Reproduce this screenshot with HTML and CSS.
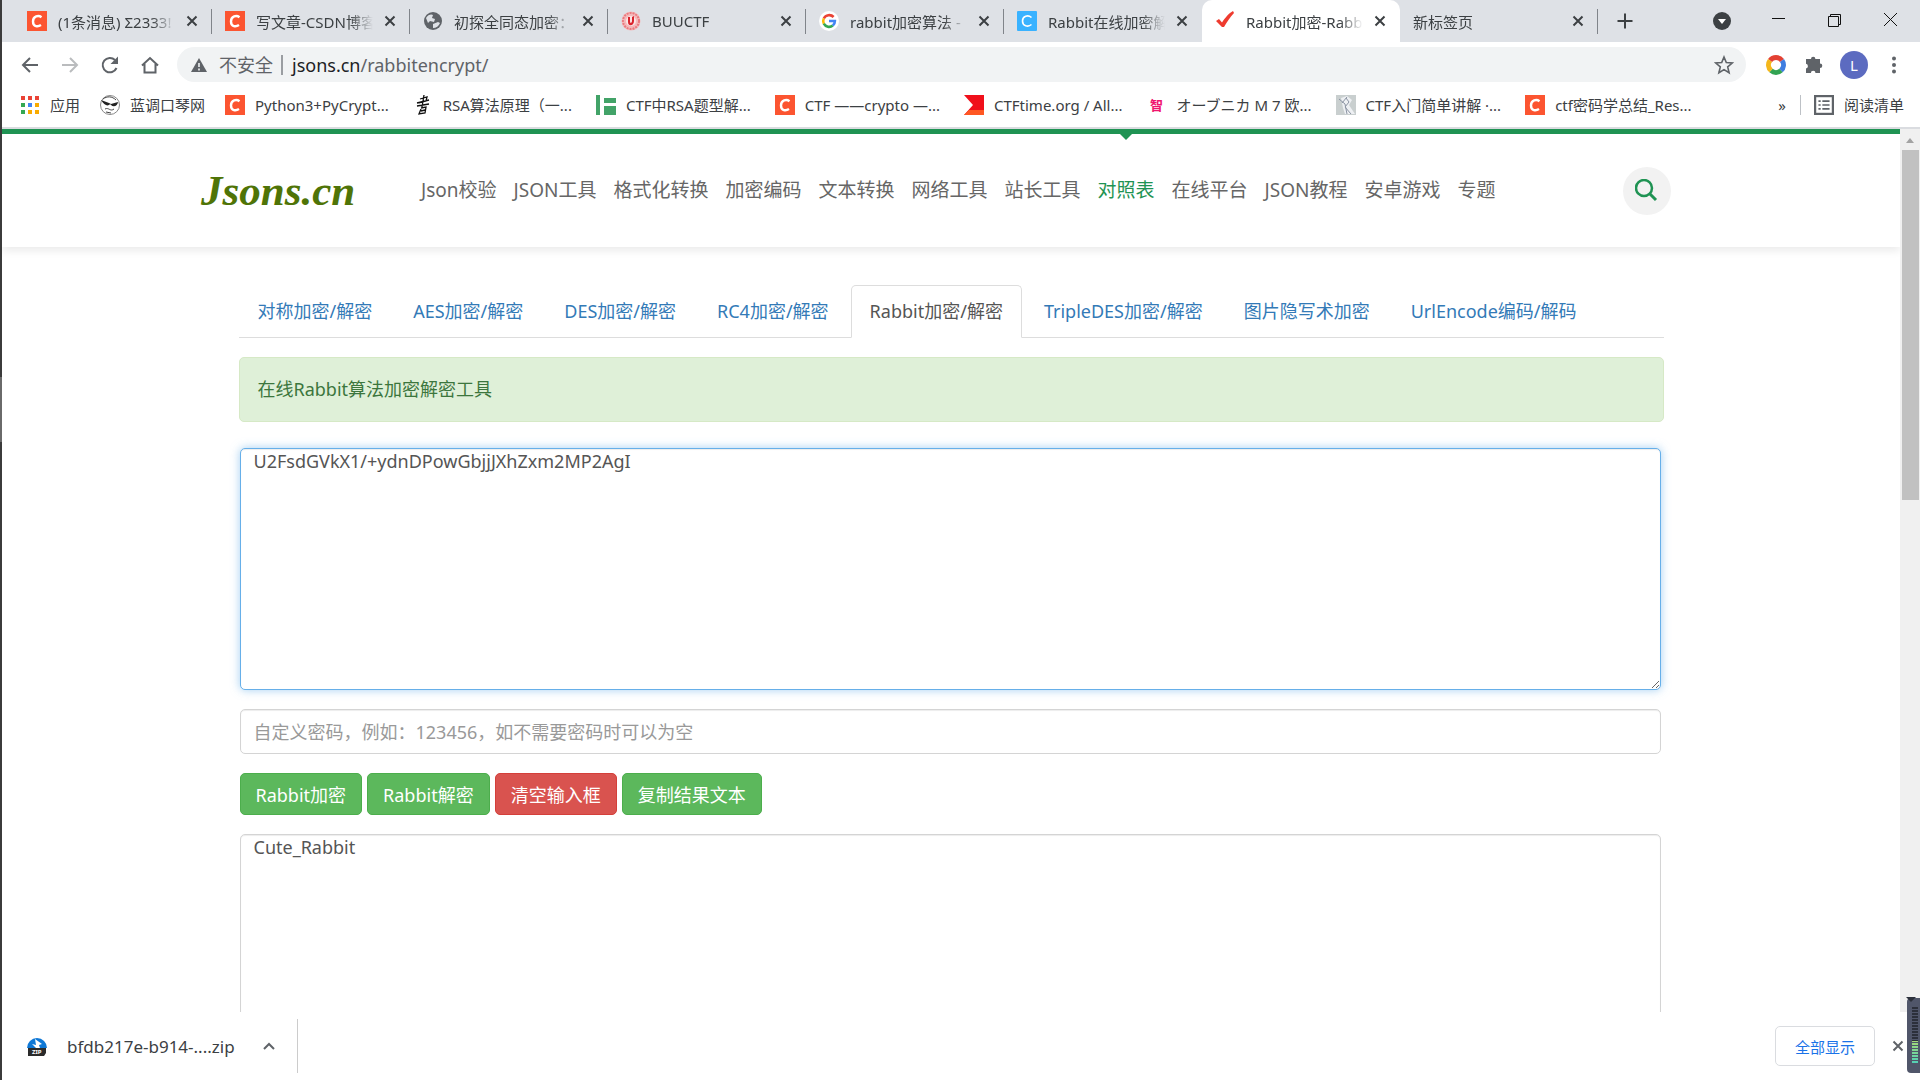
FILE: index.html
```
<!DOCTYPE html>
<html lang="zh-CN">
<head>
  <meta charset="UTF-8">
  <meta name="viewport" content="width=device-width, initial-scale=1.0">
  <title>Rabbit加密-Rabbit解密</title>
  <link rel="stylesheet" href="styles.css">
</head>
<body>
  <svg class="sprite" aria-hidden="true">
    <symbol id="csdn" viewBox="0 0 20 20"><rect width="20" height="20" fill="#fc5531"/><path d="M14.500 6.200C11.500 4 6 5 6 10.500s5 5.500 8 3.600" fill="none" stroke="#fff" stroke-width="2.400"/></symbol>
    <symbol id="close" viewBox="0 0 12 12"><path d="M1.500 1.500l9 9M10.500 1.500l-9 9" stroke="currentColor" stroke-width="2" fill="none"/></symbol>
  </svg>

  <div class="window">
    <div class="tab-strip">
      <div class="tab"><svg class="favicon"><use href="#csdn"/></svg><span class="tab-title">(1条消息) Σ2333!</span><button class="tab-close" aria-label="关闭"><svg><use href="#close"/></svg></button></div>
      <div class="tab"><svg class="favicon"><use href="#csdn"/></svg><span class="tab-title">写文章-CSDN博客</span><button class="tab-close" aria-label="关闭"><svg><use href="#close"/></svg></button></div>
      <div class="tab"><svg class="favicon" viewBox="0 0 20 20"><circle cx="10" cy="10" r="9" fill="#5f6368"/><path d="M3 7c2-4 6-4 7-3l-1 3 3 1-1 3-4-1-2 2zM10 13l5-2 2 1c-1 3-4 5-7 5z" fill="#dee1e6"/></svg><span class="tab-title">初探全同态加密：</span><button class="tab-close" aria-label="关闭"><svg><use href="#close"/></svg></button></div>
      <div class="tab"><svg class="favicon" viewBox="0 0 20 20"><circle cx="10" cy="10" r="9.500" fill="#f4b9bb"/><circle cx="10" cy="10" r="8" fill="none" stroke="#ea7a7f" stroke-width="2" stroke-dasharray="2 1"/><circle cx="10" cy="10" r="5" fill="#fbe5e5"/><path d="M7 6v5c0 5 6 4 6-1V5l-2 1v4c0 2-2 3-2 0V6z" fill="#d9232c"/></svg><span class="tab-title">BUUCTF</span><button class="tab-close" aria-label="关闭"><svg><use href="#close"/></svg></button></div>
      <div class="tab"><svg class="favicon" viewBox="0 0 20 20"><circle cx="10" cy="10" r="10" fill="#fff"/><g fill="none" stroke-width="2.600"><path d="M14.600 6A6 6 0 0 0 4.800 7.500" stroke="#ea4335"/><path d="M4.800 7.500a6 6 0 0 0 0 5.200" stroke="#fbbc05"/><path d="M4.800 12.700a6 6 0 0 0 9 1.900" stroke="#34a853"/><path d="M13.800 14.600A6 6 0 0 0 15.900 10H10" stroke="#4285f4"/></g></svg><span class="tab-title">rabbit加密算法 -</span><button class="tab-close" aria-label="关闭"><svg><use href="#close"/></svg></button></div>
      <div class="tab no-line"><svg class="favicon" viewBox="0 0 20 20"><rect width="20" height="20" rx="1" fill="#39b2ff"/><path d="M14.500 6.500C11 3.500 5.500 5 5.500 10s5.500 6.500 9 3.500" fill="none" stroke="#fff" stroke-width="1.600"/></svg><span class="tab-title">Rabbit在线加密解</span><button class="tab-close" aria-label="关闭"><svg><use href="#close"/></svg></button></div>
      <div class="tab active"><svg class="favicon" viewBox="0 0 20 20"><path d="M1 10l3-2 3 3.500C10 7 14 2 18 0l1 2c-4 4-7 9-10 14H7z" fill="#ee3b2f"/></svg><span class="tab-title">Rabbit加密-Rabb</span><button class="tab-close" aria-label="关闭"><svg><use href="#close"/></svg></button></div>
      <div class="tab"><span class="tab-title">新标签页</span><button class="tab-close" aria-label="关闭"><svg><use href="#close"/></svg></button></div>
      <button class="new-tab" aria-label="打开新的标签页"><svg viewBox="0 0 16 16"><path d="M8 0.500v15M0.500 8h15" stroke="#3c4043" stroke-width="2"/></svg></button>
      <div class="window-buttons">
        <button aria-label="搜索标签页"><svg viewBox="0 0 18 18"><circle cx="9" cy="9" r="9" fill="#3c4043"/><path d="M5 7h8l-4 5z" fill="#fff"/></svg></button>
        <button aria-label="最小化"><svg viewBox="0 0 18 18"><path d="M3 6.500h13" stroke="#111"/></svg></button>
        <button aria-label="还原"><svg viewBox="0 0 18 18"><path d="M3.500 4.500h10v10h-10zM5.500 4.500v-2h10v10h-2" fill="none" stroke="#111"/></svg></button>
        <button aria-label="关闭窗口"><svg viewBox="0 0 18 18"><path d="M3 1l13 13M16 1L3 14" stroke="#111"/></svg></button>
      </div>
    </div>

    <div class="toolbar">
      <button class="tool" aria-label="后退"><svg viewBox="0 0 20 20"><path d="M18 10H3M10 3l-7 7 7 7" fill="none" stroke="#5f6368" stroke-width="2"/></svg></button>
      <button class="tool" aria-label="前进"><svg viewBox="0 0 20 20"><path d="M2 10h15M10 3l7 7-7 7" fill="none" stroke="#babcbe" stroke-width="2"/></svg></button>
      <button class="tool" aria-label="重新加载"><svg viewBox="0 0 20 20"><path d="M16.500 13A7.200 7.200 0 1 1 15 5" fill="none" stroke="#5f6368" stroke-width="2"/><path d="M18 1.500V9h-7.500z" fill="#5f6368"/></svg></button>
      <button class="tool" aria-label="主页"><svg viewBox="0 0 20 20"><path d="M2 10.500L10 3l8 7.500M4.500 9v8.500h11V9" fill="none" stroke="#5f6368" stroke-width="2"/></svg></button>
      <div class="omnibox">
        <svg class="warn" viewBox="0 0 16 16"><path d="M8 1l8 14H0z" fill="#5f6368"/><path d="M8 6v4M8 11.500v2" stroke="#f1f3f4" stroke-width="1.600"/></svg>
        <span class="insecure">不安全</span>
        <span class="url"><b>jsons.cn</b>/rabbitencrypt/</span>
        <button class="star" aria-label="为此标签页添加书签"><svg viewBox="0 0 20 20"><path d="M10 2l2.300 5.500 6 .5-4.600 3.900 1.400 5.800L10 14.600l-5.100 3.100 1.400-5.800L1.700 8l6-.5z" fill="none" stroke="#5f6368" stroke-width="1.600"/></svg></button>
      </div>
      <div class="extensions">
        <button aria-label="扩展"><svg viewBox="0 0 20 20" fill="none" stroke-width="5"><path d="M4 5.500a7.500 7.500 0 0 1 12 0" stroke="#e34133"/><path d="M16 5.500a7.500 7.500 0 0 1-1 10" stroke="#3f7de0"/><path d="M15 15.500a7.500 7.500 0 0 1-10 0" stroke="#32a352"/><path d="M5 15.500a7.500 7.500 0 0 1-1-10" stroke="#f4b71b"/></svg></button>
        <button aria-label="扩展程序"><svg viewBox="0 0 20 20"><path d="M7 4a2.200 2.200 0 0 1 4.400 0H16v4.500a2.300 2.300 0 0 1 0 4.600V18h-4.500a2.300 2.300 0 0 0-4.600 0H2v-4.500a2.400 2.400 0 0 0 0-4.700V4z" fill="#5f6368"/></svg></button>
        <button class="avatar" aria-label="用户">L</button>
        <button aria-label="菜单"><svg viewBox="0 0 20 20" fill="#5f6368"><circle cx="10" cy="3.500" r="2"/><circle cx="10" cy="10" r="2"/><circle cx="10" cy="16.500" r="2"/></svg></button>
      </div>
    </div>

    <div class="bookmarks">
      <a href="#"><svg viewBox="0 0 20 20"><path d="M1 1h4v4H1zM8 1h4v4H8zM15 1h4v4h-4z" fill="#ea4335"/><path d="M1 8h4v4H1zM1 15h4v4H1z" fill="#34a853"/><path d="M8 8h4v4H8z" fill="#4285f4"/><path d="M15 8h4v4h-4zM8 15h4v4H8zM15 15h4v4h-4z" fill="#f9ab00"/></svg>应用</a>
      <a href="#"><svg viewBox="0 0 20 20"><circle cx="10" cy="10" r="9.500" fill="#fff" stroke="#888"/><path d="M1 5l8 3 2 1 7-2c0 3-4 6-7 3l-1-1c-2 3-6 1-9-4z" fill="#222"/><path d="M3 4c4-3 9-3 13 1M5 14c4-2 5 3 9 0M6 17l5 1" fill="none" stroke="#444"/></svg>蓝调口琴网</a>
      <a href="#"><svg><use href="#csdn"/></svg>Python3+PyCrypt...</a>
      <a href="#"><svg viewBox="0 0 20 20"><path d="M7 4l7-2-1 4-7 2M4 8l12-3M11 0L9 12M4 11l12-2M8 13l5-1-1 6-6 1 2-5M8 16l4-1" fill="none" stroke="#111" stroke-width="1.300"/></svg>RSA算法原理（一...</a>
      <a href="#"><svg viewBox="0 0 20 20" fill="#42a368"><path d="M0 0h4v20H0zM8 3h12v5H8zM8 11h12v9H8z"/></svg>CTF中RSA题型解...</a>
      <a href="#"><svg><use href="#csdn"/></svg>CTF ——crypto —...</a>
      <a href="#"><svg viewBox="0 0 20 20"><path d="M0 0h20v20H0l9-10z" fill="#f0101b"/><path d="M5 15h15v5H0z" fill="#ff5722"/></svg>CTFtime.org / All...</a>
      <a href="#"><span class="zhi">智</span>オーブニカ M 7 欧...</a>
      <a href="#"><svg viewBox="0 0 20 20"><rect width="20" height="20" fill="#c9cfcf"/><path d="M5 3l6-2 5 4-3 5 6 9H9l-2-6z" fill="#eef0f3"/><path d="M3 4l6 5 2 10M10 3l3 4-4 5 6 7M6 8l5-6" fill="none" stroke="#8b94a3"/></svg>CTF入门简单讲解 ·...</a>
      <a href="#"><svg><use href="#csdn"/></svg>ctf密码学总结_Res...</a>
      <button class="more" aria-label="更多书签">»</button>
      <button class="reading"><svg viewBox="0 0 18 18"><rect x="1" y="1" width="16" height="16" fill="none" stroke="#5f6368" stroke-width="2"/><path d="M4 5.500h2M4 9h2M4 12.500h2M7.500 5.500H14M7.500 9H14M7.500 12.500H14" stroke="#5f6368" stroke-width="1.500"/></svg>阅读清单</button>
    </div>

    <div class="viewport">
      <div class="page">
        <header class="site-header">
          <div class="header-inner">
            <a class="logo" href="#">Jsons.cn</a>
            <nav class="site-nav">
              <a href="#">Json校验</a>
              <a href="#">JSON工具</a>
              <a href="#">格式化转换</a>
              <a href="#">加密编码</a>
              <a href="#">文本转换</a>
              <a href="#">网络工具</a>
              <a href="#">站长工具</a>
              <a href="#" class="current">对照表</a>
              <a href="#">在线平台</a>
              <a href="#">JSON教程</a>
              <a href="#">安卓游戏</a>
              <a href="#">专题</a>
            </nav>
            <button class="search" aria-label="搜索"><svg viewBox="0 0 24 24"><circle cx="9" cy="9" r="8" fill="none" stroke="#1f9353" stroke-width="2.500"/><path d="M15 15l6 6" stroke="#1f9353" stroke-width="3"/></svg></button>
          </div>
        </header>

        <main class="container">
          <nav class="tool-tabs">
            <a href="#">对称加密/解密</a>
            <a href="#">AES加密/解密</a>
            <a href="#">DES加密/解密</a>
            <a href="#">RC4加密/解密</a>
            <a href="#" class="current">Rabbit加密/解密</a>
            <a href="#">TripleDES加密/解密</a>
            <a href="#">图片隐写术加密</a>
            <a href="#">UrlEncode编码/解码</a>
          </nav>
          <div class="alert">在线Rabbit算法加密解密工具</div>
          <form class="crypt-form">
            <textarea class="control source" aria-label="输入文本" spellcheck="false">U2FsdGVkX1/+ydnDPowGbjjJXhZxm2MP2AgI</textarea>
            <input class="control" type="text" aria-label="密码" placeholder="自定义密码，例如：123456，如不需要密码时可以为空">
            <div class="buttons">
              <button type="button" class="btn">Rabbit加密</button>
              <button type="button" class="btn">Rabbit解密</button>
              <button type="button" class="btn danger">清空输入框</button>
              <button type="button" class="btn">复制结果文本</button>
            </div>
            <textarea class="control result" aria-label="结果" spellcheck="false">Cute_Rabbit</textarea>
          </form>
        </main>
      </div>
      <div class="scrollbar">
        <svg viewBox="0 0 20 20"><path d="M6 14l4-5 4 5z" fill="#a3a3a3"/></svg>
        <div class="thumb"></div>
      </div>
    </div>

    <div class="downloads">
      <button class="file">
        <svg class="zip" viewBox="0 0 20 20"><path d="M0 12a10 10 0 1 1 20 0z" fill="#0f78d6"/><path d="M8 3l7 5-3 1 1 3H9L5 8l4 1z" fill="#fff"/><path d="M1 12h18v5l-2 3H1z" fill="#2b2b2b"/><text x="5" y="18" class="zip-label">ZIP</text></svg>
        <span>bfdb217e-b914-....zip</span>
        <svg class="chevron" viewBox="0 0 12 12"><path d="M1 9l5-5 5 5" fill="none" stroke="#5f6368" stroke-width="2"/></svg>
      </button>
      <button class="show-all">全部显示</button>
      <button class="close-bar" aria-label="关闭"><svg><use href="#close"/></svg></button>
    </div>
    <div class="meter"><div class="meter-bars"></div></div>
  </div>
</body>
</html>
```
FILE: styles.css
```
* {
  box-sizing: border-box;
}

body {
  margin: 0;
  font-family: "Noto Sans", "Noto Sans CJK SC", sans-serif;
  font-size: 15px;
  color: #3c4043;
}

button {
  margin: 0;
  padding: 0;
  border: 0;
  background: none;
  font: inherit;
  color: inherit;
}

a {
  color: inherit;
  text-decoration: none;
}

svg {
  display: block;
  flex: none;
}

.sprite {
  display: none;
}

.window {
  position: relative;
  display: flex;
  flex-direction: column;
  height: 100vh;
  overflow: hidden;
  border-left: 2px solid #3b3b3b;
  border-image: linear-gradient(#3b3b3b 35%, #6a6a6a 35% 41%, #3b3b3b 41%) 2;
  background: #fff;
}

/* tab strip */
.tab-strip {
  display: flex;
  height: 42px;
  padding-left: 12px;
  background: #dee1e6;
}

.tab {
  position: relative;
  display: flex;
  align-items: center;
  flex: 0 1 198px;
  min-width: 0;
  gap: 11px;
  padding: 0 14px 0 13px;
}

.tab::after {
  content: "";
  position: absolute;
  right: 0;
  top: 9px;
  height: 25px;
  width: 1px;
  background: #80848a;
}

.tab.active::after,
.tab.no-line::after {
  display: none;
}

.tab.active {
  background: #fff;
  border-radius: 10px 10px 0 0;
}

.favicon {
  width: 20px;
  height: 20px;
}

.tab-title {
  flex: 1;
  overflow: hidden;
  white-space: nowrap;
  -webkit-mask-image: linear-gradient(to right, #000 80%, transparent);
  mask-image: linear-gradient(to right, #000 80%, transparent);
}

.tab-close svg {
  width: 12px;
  height: 12px;
}

.new-tab {
  padding: 0 19px;
}

.new-tab svg {
  width: 16px;
  height: 16px;
}

.window-buttons {
  display: flex;
  gap: 38px;
  margin-left: auto;
  padding-right: 21px;
}

.window-buttons svg {
  width: 18px;
  height: 18px;
}

/* address bar */
.toolbar {
  display: flex;
  align-items: center;
  height: 45px;
  padding: 0 14px 0 16px;
}

.tool {
  padding: 0 10px;
}

.tool:first-child {
  padding-left: 2px;
}

.tool svg {
  width: 20px;
  height: 20px;
}

.omnibox {
  display: flex;
  align-items: center;
  flex: 1;
  height: 35px;
  margin-left: 7px;
  padding: 0 12px 0 14px;
  border-radius: 18px;
  background: #f1f3f4;
  font-size: 18px;
  color: #5f6368;
}

.warn {
  width: 16px;
  height: 16px;
  margin-right: 12px;
}

.insecure {
  padding-right: 8px;
  border-right: 2px solid #9a9da1;
  line-height: 20px;
}

.url {
  flex: 1;
  padding-left: 9px;
}

.url b {
  font-weight: normal;
  color: #202124;
}

.star svg {
  width: 20px;
  height: 20px;
}

.extensions {
  display: flex;
  align-items: center;
  gap: 14px;
  margin-left: 18px;
}

.extensions button {
  display: flex;
  align-items: center;
  justify-content: center;
  width: 24px;
}

.extensions svg {
  width: 20px;
  height: 20px;
}

.extensions .avatar {
  width: 28px;
  height: 28px;
  border-radius: 50%;
  background: #5c6bc0;
  color: #fff;
}

/* bookmarks */
.bookmarks {
  display: flex;
  align-items: center;
  height: 42px;
  padding: 0 16px 5px 18px;
  border-bottom: 2px solid #dadce0;
  white-space: nowrap;
}

.bookmarks a {
  display: flex;
  align-items: center;
  gap: 10px;
  margin-right: 24px;
}

.bookmarks a:nth-child(-n+2) {
  margin-right: 20px;
}

.bookmarks svg {
  width: 20px;
  height: 20px;
}

.zhi {
  width: 20px;
  text-align: center;
  font-size: 13px;
  font-weight: bold;
  color: #f0146e;
}

.more {
  margin-left: auto;
  padding-right: 14px;
}

.reading {
  display: flex;
  align-items: center;
  gap: 10px;
  padding-left: 13px;
  border-left: 1px solid #bdc1c6;
  line-height: 20px;
}

/* web page */
.viewport {
  display: flex;
  flex: 1;
  min-height: 0;
  overflow: hidden;
}

.page {
  flex: 1;
  min-width: 0;
  overflow: hidden;
  font-size: 18px;
}

.site-header {
  border-top: 5px solid #1f9353;
  box-shadow: 0 4px 8px rgba(0, 0, 0, 0.08);
}

.header-inner {
  display: flex;
  align-items: center;
  max-width: 1500px;
  height: 113px;
  margin: 0 auto;
  padding-right: 30px;
}

.logo {
  width: 220px;
  font-family: "Liberation Serif", serif;
  font-size: 43px;
  font-weight: bold;
  font-style: italic;
  color: #4f7407;
}

.site-nav {
  display: flex;
  align-self: stretch;
  gap: 17px;
  font-size: 19px;
  line-height: 112px;
  white-space: nowrap;
  color: #666;
}

.site-nav .current {
  position: relative;
  color: #1f9353;
}

.site-nav .current::before {
  content: "";
  position: absolute;
  top: 0;
  left: 50%;
  margin-left: -6px;
  border: 6px solid transparent;
  border-top-color: #1f9353;
  border-bottom: 0;
}

.search {
  display: flex;
  align-items: center;
  justify-content: center;
  width: 48px;
  height: 48px;
  margin-left: auto;
  border-radius: 50%;
  background: #f2f2f2;
}

.search svg {
  width: 24px;
  height: 24px;
}

.container {
  max-width: 1425px;
  margin: 38px auto 0;
}

.tool-tabs {
  display: flex;
  border-bottom: 1px solid #ddd;
  white-space: nowrap;
  color: #337ab7;
}

.tool-tabs a {
  margin: 0 3px -1px 0;
  padding: 13px 18px;
  border: 1px solid transparent;
  border-radius: 5px 5px 0 0;
  line-height: 25px;
}

.tool-tabs .current {
  border-color: #ddd #ddd #fff;
  background: #fff;
  color: #555;
}

.alert {
  margin: 19px 0 26px;
  padding: 19px 18px;
  border: 1px solid #d6e9c6;
  border-radius: 5px;
  background: #dff0d8;
  color: #3c763d;
  line-height: 25px;
}

.crypt-form {
  display: flex;
  flex-direction: column;
  gap: 19px;
  padding: 0 3px 0 1px;
}

.control {
  display: block;
  width: 100%;
  height: 45px;
  padding: 0 13px;
  border: 1px solid #d4d4d4;
  border-radius: 5px;
  box-shadow: inset 0 1px 1px rgba(0, 0, 0, 0.075);
  font: inherit;
  line-height: 25px;
  color: #555;
}

.control::placeholder {
  color: #999;
}

.control.source {
  height: 242px;
  border-color: #66afe9;
  box-shadow: inset 0 1px 1px rgba(0, 0, 0, 0.075), 0 0 10px rgba(102, 175, 233, 0.6);
}

.control.result {
  height: 242px;
}

.buttons {
  display: flex;
  gap: 5px;
}

.btn {
  height: 42px;
  padding: 0 15px;
  border: 1px solid #4cae4c;
  border-radius: 5px;
  background: #5cb85c;
  color: #fff;
}

.btn.danger {
  border-color: #d43f3a;
  background: #d9534f;
}

.scrollbar {
  width: 20px;
  background: #f0f0f0;
}

.thumb {
  height: 350px;
  margin: 1px 1px 0 2px;
  background: #c1c1c1;
}

/* download shelf */
.downloads {
  display: flex;
  align-items: center;
  height: 68px;
  padding-right: 16px;
  background: #fff;
}

.file {
  display: flex;
  align-items: center;
  height: 54px;
  padding: 0 22px 0 25px;
  border-right: 1px solid #ccc;
  font-size: 17px;
}

.zip {
  width: 20px;
  height: 20px;
  margin-right: 20px;
}

.zip-label {
  font-size: 6px;
  font-weight: bold;
  fill: #fff;
}

.chevron {
  width: 12px;
  height: 12px;
  margin-left: 28px;
}

.show-all {
  width: 100px;
  height: 40px;
  margin-left: auto;
  border: 1px solid #dadce0;
  border-radius: 5px;
  color: #1a73e8;
}

.close-bar {
  margin-left: 17px;
  color: #5f6368;
}

.close-bar svg {
  width: 12px;
  height: 12px;
}

/* volume meter floating over the corner */
.meter {
  position: absolute;
  right: 0;
  bottom: 7px;
  width: 13px;
  height: 75px;
  padding: 9px 2px 9px 5px;
  border-radius: 4px 0 0 4px;
  background: #50566a;
}

.meter::before {
  content: "";
  position: absolute;
  top: -1px;
  left: -1px;
  border: 5px solid transparent;
  border-top-color: #2c303b;
  border-bottom: 0;
}

.meter-bars {
  height: 57px;
  background:
    repeating-linear-gradient(transparent 0 2px, #50566a 2px 3px),
    linear-gradient(#2c303b 60%, #a3d977 60%, #4fd0b8);
}
```
